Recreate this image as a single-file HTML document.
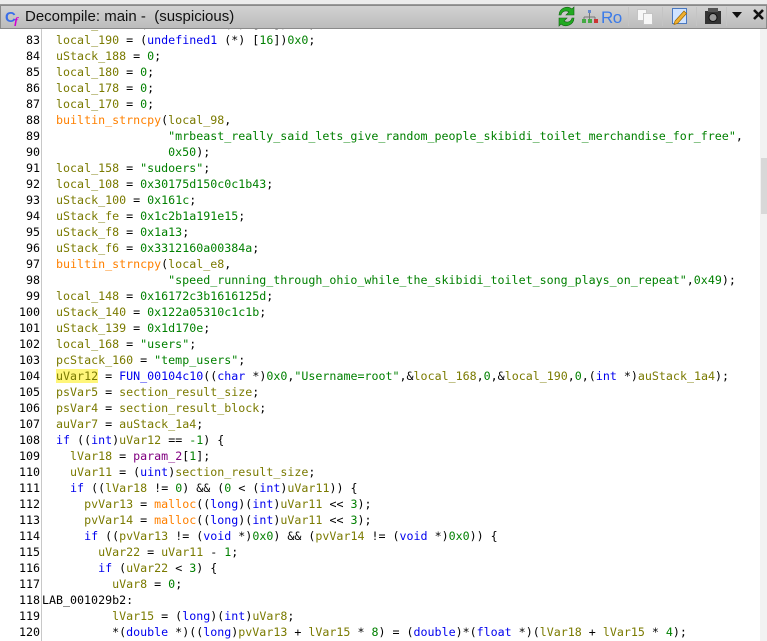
<!DOCTYPE html>
<html><head><meta charset="utf-8"><style>
html,body{margin:0;padding:0;}
body{width:767px;height:641px;overflow:hidden;background:#fff;position:relative;font-family:"DejaVu Sans Mono",monospace;}
#top{position:absolute;left:0;top:0;width:767px;height:4px;background:#ececec;border-bottom:1px solid #9a9a9a;}
#title{position:absolute;left:0;top:5px;width:765px;height:22px;background:linear-gradient(#d2d2d2,#bcbcbc);border:1px solid #8a8a8a;}
#title .t{position:absolute;left:24px;top:2px;font:15px "Liberation Sans",sans-serif;color:#111;}
#code{position:absolute;left:0;top:29px;width:760px;height:612px;overflow:hidden;}
#gut{position:absolute;left:0;top:0;width:41px;height:612px;border-right:1px solid #c8c8c8;background:#fff;}
.l{position:absolute;left:0;height:16px;line-height:16px;font-size:11.65px;white-space:pre;color:#000;}
.n{display:inline-block;width:40px;text-align:right;}
.c{position:absolute;left:42px;top:0;}
.v{color:#7a7a00}.k{color:#0000ee}.g{color:#008000}.f{color:#0000ee}.m{color:#ff8000}.p{color:#800080}
#sb{position:absolute;left:760px;top:29px;width:7px;height:612px;background:#f2f2f2;}
#th{position:absolute;left:761px;top:158px;width:6px;height:56px;background:#d8d8d8;}
.hl{background:#fff67a;}
</style></head><body>
<div id="top"></div>
<div id="title">
<svg style="position:absolute;left:4px;top:2px" width="18" height="18" viewBox="0 0 18 18"><text x="0" y="14" font-family="Liberation Sans" font-weight="bold" font-size="15" fill="#3a6ee8">C</text><text x="9" y="17" font-family="Liberation Serif" font-style="italic" font-weight="bold" font-size="12" fill="#d000d0">f</text></svg>
<span class="t">Decompile: main -&nbsp; (suspicious)</span>
</div>
<svg style="position:absolute;left:0;top:0" width="767" height="29" viewBox="0 0 767 29">
<path d="M559 15a8 8 0 0 1 13-6l2-2v8h-8l3-3a5 5 0 0 0-8 3z" fill="#22aa22" stroke="#106010" stroke-width=".6"/>
<path d="M574 18a8 8 0 0 1-13 6l-2 2v-8h8l-3 3a5 5 0 0 0 8-3z" fill="#22aa22" stroke="#106010" stroke-width=".6"/>
<rect x="588" y="10" width="3" height="3" fill="#6688cc"/><path d="M589.5 13v4M584 17h11M584 17v2M589.5 17v2M595 17v2" stroke="#777" stroke-width="1" fill="none"/>
<rect x="582" y="19" width="4" height="4" fill="#44aa44"/><rect x="588" y="19" width="4" height="4" fill="#44aa44"/><rect x="594" y="19" width="4" height="4" fill="#cc3333"/>
<text x="601" y="23" font-family="Liberation Sans" font-size="17" fill="#3a7ae8" letter-spacing="-0.5">Ro</text>
<line x1="628.5" y1="7" x2="628.5" y2="26" stroke="#c4c4c4"/>
<rect x="637.5" y="9.5" width="9" height="11" fill="#f7f7f7" stroke="#c4c4c4"/><rect x="643.5" y="13.5" width="9" height="11" fill="#f7f7f7" stroke="#c4c4c4"/>
<line x1="662.5" y1="7" x2="662.5" y2="26" stroke="#c4c4c4"/>
<rect x="672.5" y="8.5" width="14" height="15" fill="#cfe3ff" stroke="#4a78c0"/><path d="M675 21l9-10 2.5 2.5-9 10-3.5 1z" fill="#f0b030" stroke="#996600" stroke-width=".7"/>
<line x1="696.5" y1="7" x2="696.5" y2="26" stroke="#c4c4c4"/>
<rect x="705" y="11" width="16" height="13" fill="#333"/><rect x="708" y="8" width="10" height="4" fill="#555"/><circle cx="713" cy="17.5" r="4" fill="#999" stroke="#111"/>
<line x1="726.5" y1="7" x2="726.5" y2="26" stroke="#c4c4c4"/>
<path d="M732 12h10l-5 6z" fill="#111"/>
<path d="M754 10l9 9M763 10l-9 9" stroke="#111" stroke-width="2.6"/>
</svg>
<div id="code"><div id="gut"></div>
<div class="l" style="top:-13px"><span class="n"> 82</span><span class="c">  <span class="v">local_1a8</span> = (<span class="k">undefined1</span> (*) [<span class="g">16</span>])<span class="g">0x0</span>;</span></div>
<div class="l" style="top:3px"><span class="n"> 83</span><span class="c">  <span class="v">local_190</span> = (<span class="k">undefined1</span> (*) [<span class="g">16</span>])<span class="g">0x0</span>;</span></div>
<div class="l" style="top:19px"><span class="n"> 84</span><span class="c">  <span class="v">uStack_188</span> = <span class="g">0</span>;</span></div>
<div class="l" style="top:35px"><span class="n"> 85</span><span class="c">  <span class="v">local_180</span> = <span class="g">0</span>;</span></div>
<div class="l" style="top:51px"><span class="n"> 86</span><span class="c">  <span class="v">local_178</span> = <span class="g">0</span>;</span></div>
<div class="l" style="top:67px"><span class="n"> 87</span><span class="c">  <span class="v">local_170</span> = <span class="g">0</span>;</span></div>
<div class="l" style="top:83px"><span class="n"> 88</span><span class="c">  <span class="m">builtin_strncpy</span>(<span class="v">local_98</span>,</span></div>
<div class="l" style="top:99px"><span class="n"> 89</span><span class="c">                  <span class="g">"mrbeast_really_said_lets_give_random_people_skibidi_toilet_merchandise_for_free"</span>,</span></div>
<div class="l" style="top:115px"><span class="n"> 90</span><span class="c">                  <span class="g">0x50</span>);</span></div>
<div class="l" style="top:131px"><span class="n"> 91</span><span class="c">  <span class="v">local_158</span> = <span class="g">"sudoers"</span>;</span></div>
<div class="l" style="top:147px"><span class="n"> 92</span><span class="c">  <span class="v">local_108</span> = <span class="g">0x30175d150c0c1b43</span>;</span></div>
<div class="l" style="top:163px"><span class="n"> 93</span><span class="c">  <span class="v">uStack_100</span> = <span class="g">0x161c</span>;</span></div>
<div class="l" style="top:179px"><span class="n"> 94</span><span class="c">  <span class="v">uStack_fe</span> = <span class="g">0x1c2b1a191e15</span>;</span></div>
<div class="l" style="top:195px"><span class="n"> 95</span><span class="c">  <span class="v">uStack_f8</span> = <span class="g">0x1a13</span>;</span></div>
<div class="l" style="top:211px"><span class="n"> 96</span><span class="c">  <span class="v">uStack_f6</span> = <span class="g">0x3312160a00384a</span>;</span></div>
<div class="l" style="top:227px"><span class="n"> 97</span><span class="c">  <span class="m">builtin_strncpy</span>(<span class="v">local_e8</span>,</span></div>
<div class="l" style="top:243px"><span class="n"> 98</span><span class="c">                  <span class="g">"speed_running_through_ohio_while_the_skibidi_toilet_song_plays_on_repeat"</span>,<span class="g">0x49</span>);</span></div>
<div class="l" style="top:259px"><span class="n"> 99</span><span class="c">  <span class="v">local_148</span> = <span class="g">0x16172c3b1616125d</span>;</span></div>
<div class="l" style="top:275px"><span class="n">100</span><span class="c">  <span class="v">uStack_140</span> = <span class="g">0x122a05310c1c1b</span>;</span></div>
<div class="l" style="top:291px"><span class="n">101</span><span class="c">  <span class="v">uStack_139</span> = <span class="g">0x1d170e</span>;</span></div>
<div class="l" style="top:307px"><span class="n">102</span><span class="c">  <span class="v">local_168</span> = <span class="g">"users"</span>;</span></div>
<div class="l" style="top:323px"><span class="n">103</span><span class="c">  <span class="v">pcStack_160</span> = <span class="g">"temp_users"</span>;</span></div>
<div class="l" style="top:339px"><span class="n">104</span><span class="c">  <span class="v hl">uVar12</span> = <span class="f">FUN_00104c10</span>((<span class="k">char</span> *)<span class="g">0x0</span>,<span class="g">"Username=root"</span>,&amp;<span class="v">local_168</span>,<span class="g">0</span>,&amp;<span class="v">local_190</span>,<span class="g">0</span>,(<span class="k">int</span> *)<span class="v">auStack_1a4</span>);</span></div>
<div class="l" style="top:355px"><span class="n">105</span><span class="c">  <span class="v">psVar5</span> = <span class="v">section_result_size</span>;</span></div>
<div class="l" style="top:371px"><span class="n">106</span><span class="c">  <span class="v">psVar4</span> = <span class="v">section_result_block</span>;</span></div>
<div class="l" style="top:387px"><span class="n">107</span><span class="c">  <span class="v">auVar7</span> = <span class="v">auStack_1a4</span>;</span></div>
<div class="l" style="top:403px"><span class="n">108</span><span class="c">  <span class="k">if</span> ((<span class="k">int</span>)<span class="v">uVar12</span> == <span class="g">-1</span>) {</span></div>
<div class="l" style="top:419px"><span class="n">109</span><span class="c">    <span class="v">lVar18</span> = <span class="p">param_2</span>[<span class="g">1</span>];</span></div>
<div class="l" style="top:435px"><span class="n">110</span><span class="c">    <span class="v">uVar11</span> = (<span class="k">uint</span>)<span class="v">section_result_size</span>;</span></div>
<div class="l" style="top:451px"><span class="n">111</span><span class="c">    <span class="k">if</span> ((<span class="v">lVar18</span> != <span class="g">0</span>) &amp;&amp; (<span class="g">0</span> &lt; (<span class="k">int</span>)<span class="v">uVar11</span>)) {</span></div>
<div class="l" style="top:467px"><span class="n">112</span><span class="c">      <span class="v">pvVar13</span> = <span class="m">malloc</span>((<span class="k">long</span>)(<span class="k">int</span>)<span class="v">uVar11</span> &lt;&lt; <span class="g">3</span>);</span></div>
<div class="l" style="top:483px"><span class="n">113</span><span class="c">      <span class="v">pvVar14</span> = <span class="m">malloc</span>((<span class="k">long</span>)(<span class="k">int</span>)<span class="v">uVar11</span> &lt;&lt; <span class="g">3</span>);</span></div>
<div class="l" style="top:499px"><span class="n">114</span><span class="c">      <span class="k">if</span> ((<span class="v">pvVar13</span> != (<span class="k">void</span> *)<span class="g">0x0</span>) &amp;&amp; (<span class="v">pvVar14</span> != (<span class="k">void</span> *)<span class="g">0x0</span>)) {</span></div>
<div class="l" style="top:515px"><span class="n">115</span><span class="c">        <span class="v">uVar22</span> = <span class="v">uVar11</span> - <span class="g">1</span>;</span></div>
<div class="l" style="top:531px"><span class="n">116</span><span class="c">        <span class="k">if</span> (<span class="v">uVar22</span> &lt; <span class="g">3</span>) {</span></div>
<div class="l" style="top:547px"><span class="n">117</span><span class="c">          <span class="v">uVar8</span> = <span class="g">0</span>;</span></div>
<div class="l" style="top:563px"><span class="n">118</span><span class="c">LAB_001029b2:</span></div>
<div class="l" style="top:579px"><span class="n">119</span><span class="c">          <span class="v">lVar15</span> = (<span class="k">long</span>)(<span class="k">int</span>)<span class="v">uVar8</span>;</span></div>
<div class="l" style="top:595px"><span class="n">120</span><span class="c">          *(<span class="k">double</span> *)((<span class="k">long</span>)<span class="v">pvVar13</span> + <span class="v">lVar15</span> * <span class="g">8</span>) = (<span class="k">double</span>)*(<span class="k">float</span> *)(<span class="v">lVar18</span> + <span class="v">lVar15</span> * <span class="g">4</span>);</span></div>
</div>
<div id="sb"></div><div id="th"></div>
</body></html>
